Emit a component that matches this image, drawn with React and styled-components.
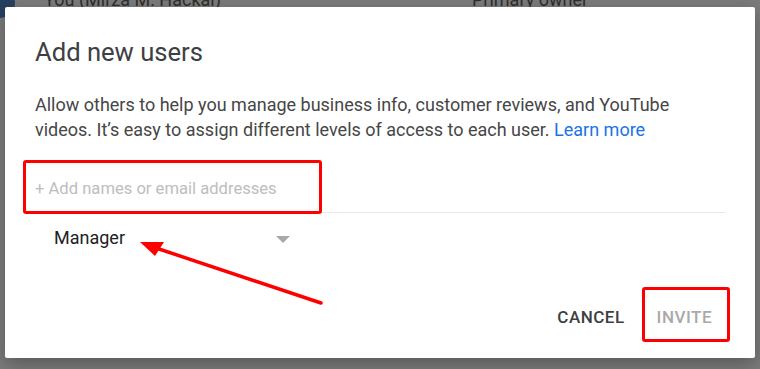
import React from "react";
import styled, { createGlobalStyle } from "styled-components";

const Global = createGlobalStyle`
  html, body { margin: 0; padding: 0; }
  body {
    width: 760px; height: 369px; overflow: hidden;
    font-family: Roboto, "Liberation Sans", Arial, sans-serif;
    background: #7b7b7b;
  }
`;

const Page = styled.div`
  position: relative;
  width: 760px;
  height: 369px;
  background: #7b7b7b;
  overflow: hidden;
`;

const Backdrop = styled.div`
  position: absolute;
  inset: 0;
  pointer-events: none;
`;

const BehindRow = styled.div`
  display: flex;
  align-items: center;
  height: 22px;
  margin-top: -12px;
  color: #2e2e2e;
  font-size: 18px;
`;

const Avatar = styled.div`
  width: 30px;
  height: 30px;
  border-radius: 50%;
  background: #27405f;
  margin-left: -15px;
  margin-top: 8px;
  flex: none;
`;

const BehindName = styled.span`
  margin-left: 29px;
  width: 428px;
`;

const Dialog = styled.div`
  position: absolute;
  left: 5px;
  top: 7px;
  width: 750px;
  height: 351px;
  background: #fff;
  border-radius: 2px;
  box-shadow: 0 6px 18px rgba(0, 0, 0, 0.28);
  display: flex;
  flex-direction: column;
  box-sizing: border-box;
`;

const Title = styled.h2`
  margin: 30px 0 0 30px;
  font-size: 25.6px;
  font-weight: 400;
  color: #3c4043;
  line-height: 30px;
`;

const Description = styled.p`
  margin: 25px 40px 0 30px;
  font-size: 18px;
  line-height: 25px;
  color: #464646;
`;

const Link = styled.a`
  color: #1a73e8;
  text-decoration: none;
`;

const Field = styled.div`
  margin: 23px 30px 0 19px;
  height: 48px;
  border-bottom: 1px solid #e8e8e8;
  padding: 14px 0 0 11px;
  box-sizing: border-box;
`;

const Placeholder = styled.div`
  font-size: 16.6px;
  line-height: 20px;
  color: #bdbdbd;
`;

const SelectRow = styled.div`
  margin: 10px 0 0 19px;
  width: 266px;
  height: 30px;
  display: flex;
  align-items: center;
  justify-content: space-between;
  padding-left: 30px;
  box-sizing: border-box;
`;

const SelectValue = styled.span`
  font-size: 18px;
  line-height: 24px;
  color: #212121;
`;

const Caret = styled.span`
  width: 0;
  height: 0;
  border-left: 7px solid transparent;
  border-right: 7px solid transparent;
  border-top: 7px solid #a8a8a8;
  margin-top: 3px;
`;

const Actions = styled.div`
  margin-top: auto;
  margin-bottom: 31px;
  margin-right: 43px;
  display: flex;
  justify-content: flex-end;
  align-items: center;
  gap: 32px;
`;

const ActionButton = styled.button`
  background: none;
  border: none;
  padding: 0;
  font-family: inherit;
  font-size: 17px;
  font-weight: 500;
  letter-spacing: 0.5px;
  color: ${(p) => (p.$disabled ? "#a9a9a9" : "#3c4043")};
  text-transform: uppercase;
  line-height: 20px;
`;

const Highlight = styled.div`
  position: absolute;
  left: ${(p) => p.$x}px;
  top: ${(p) => p.$y}px;
  width: ${(p) => p.$w}px;
  height: ${(p) => p.$h}px;
  border: 3px solid #ff0000;
  border-radius: 3px;
  box-sizing: border-box;
  pointer-events: none;
`;

const ArrowSvg = styled.svg`
  position: absolute;
  left: 0;
  top: 0;
  pointer-events: none;
`;

export default function App() {
  return (
    <Page>
      <Global />
      <Backdrop>
        <BehindRow>
          <Avatar />
          <BehindName>You (Mirza M. Hackal)</BehindName>
          <span>Primary owner</span>
        </BehindRow>
      </Backdrop>
      <Dialog>
        <Title>Add new users</Title>
        <Description>
          Allow others to help you manage business info, customer reviews, and YouTube
          videos. It’s easy to assign different levels of access to each user.{" "}
          <Link href="#">Learn more</Link>
        </Description>
        <Field>
          <Placeholder>+ Add names or email addresses</Placeholder>
        </Field>
        <SelectRow>
          <SelectValue>Manager</SelectValue>
          <Caret />
        </SelectRow>
        <Actions>
          <ActionButton>Cancel</ActionButton>
          <ActionButton $disabled>Invite</ActionButton>
        </Actions>
      </Dialog>
      <Highlight $x={23} $y={160} $w={299} $h={54} />
      <Highlight $x={642} $y={287} $w={88} $h={55} />
      <ArrowSvg width="760" height="369" viewBox="0 0 760 369">
        <line x1="321" y1="303" x2="156" y2="248" stroke="#ff0000" strokeWidth="3.5" strokeLinecap="round" />
        <polygon points="140,242 164,242 155,256" fill="#ff0000" />
      </ArrowSvg>
    </Page>
  );
}
